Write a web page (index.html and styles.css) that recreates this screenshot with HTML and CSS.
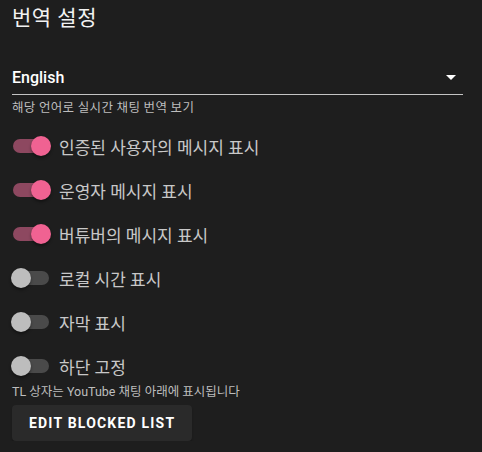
FILE: index.html
```html
<!DOCTYPE html>
<html lang="ko">
<head>
    <meta charset="UTF-8">
    <title>번역 설정</title>
    <link rel="stylesheet" href="styles.css">
</head>
<body>
    <div class="panel">
        <h1 class="title">번역 설정</h1>

        <div class="select-field">
            <div class="select-box">
                <span class="select-value">English</span>
                <span class="select-arrow"></span>
            </div>
            <div class="hint">해당 언어로 실시간 채팅 번역 보기</div>
        </div>

        <div class="switch-list">
            <label class="switch-row">
                <span class="switch on"><span class="track"></span><span class="thumb"></span></span>
                <span class="switch-label">인증된 사용자의 메시지 표시</span>
            </label>
            <label class="switch-row">
                <span class="switch on"><span class="track"></span><span class="thumb"></span></span>
                <span class="switch-label">운영자 메시지 표시</span>
            </label>
            <label class="switch-row">
                <span class="switch on"><span class="track"></span><span class="thumb"></span></span>
                <span class="switch-label">버튜버의 메시지 표시</span>
            </label>
            <label class="switch-row">
                <span class="switch"><span class="track"></span><span class="thumb"></span></span>
                <span class="switch-label">로컬 시간 표시</span>
            </label>
            <label class="switch-row">
                <span class="switch"><span class="track"></span><span class="thumb"></span></span>
                <span class="switch-label">자막 표시</span>
            </label>
            <label class="switch-row">
                <span class="switch"><span class="track"></span><span class="thumb"></span></span>
                <span class="switch-label">하단 고정</span>
            </label>
        </div>
        <div class="hint last-hint">TL 상자는 YouTube 채팅 아래에 표시됩니다</div>

        <button class="btn" type="button">Edit Blocked List</button>
    </div>
</body>
</html>
```

FILE: styles.css
```css
*{
    margin:0;
    padding:0;
    box-sizing:border-box;
    font-family:Roboto, "Noto Sans CJK KR", sans-serif;
}
body {
    background-color:#1e1e1e;
    color:#fff;
}
.panel {
    padding:4px 19px 0 12px;
}
.title {
    font-size:21px;
    font-weight:400;
    line-height:28px;
    color:#f2f2f2;
    letter-spacing:0.5px;
}
.select-field {
    margin-top:30px;
}
.select-box {
    display:flex;
    align-items:center;
    justify-content:space-between;
    height:33px;
    border-bottom:1px solid #c4c4c4;
    padding-bottom:2px;
}
.select-value {
    font-size:16px;
    font-weight:500;
    color:#fff;
}
.select-arrow {
    width:0;
    height:0;
    border-left:5px solid transparent;
    border-right:5px solid transparent;
    border-top:5px solid #fff;
    margin-right:7px;
}
.hint {
    font-size:12.5px;
    line-height:16px;
    letter-spacing:0.3px;
    color:#bdbdbd;
    margin-top:5px;
}
.switch-list {
    display:flex;
    flex-direction:column;
    margin-top:8px;
}
.switch-row {
    display:flex;
    align-items:center;
    height:44px;
    cursor:pointer;
}
.switch {
    position:relative;
    width:38px;
    height:20px;
    margin-left:1px;
    margin-right:8px;
}
.track {
    position:absolute;
    left:0;
    top:3px;
    width:36px;
    height:14px;
    border-radius:7px;
    background-color:#4a4a4a;
}
.thumb {
    position:absolute;
    left:-2px;
    top:0;
    width:20px;
    height:20px;
    border-radius:50%;
    background-color:#bdbdbd;
    box-shadow:0 2px 3px rgba(0,0,0,0.4);
}
.switch.on .track {
    background-color:#8d4860;
}
.switch.on .thumb {
    left:18px;
    background-color:#f06292;
}
.switch-label {
    font-size:17px;
    color:#c8c8c8;
}
.last-hint {
    margin-top:-4px;
    letter-spacing:0;
}
.btn {
    margin-top:5px;
    height:36px;
    padding:0 17px;
    border:none;
    border-radius:4px;
    background-color:#2a2a2a;
    color:#fff;
    font-size:14px;
    font-weight:700;
    letter-spacing:1.2px;
    text-transform:uppercase;
    box-shadow:0 2px 2px rgba(0,0,0,0.25);
    cursor:pointer;
}
```
